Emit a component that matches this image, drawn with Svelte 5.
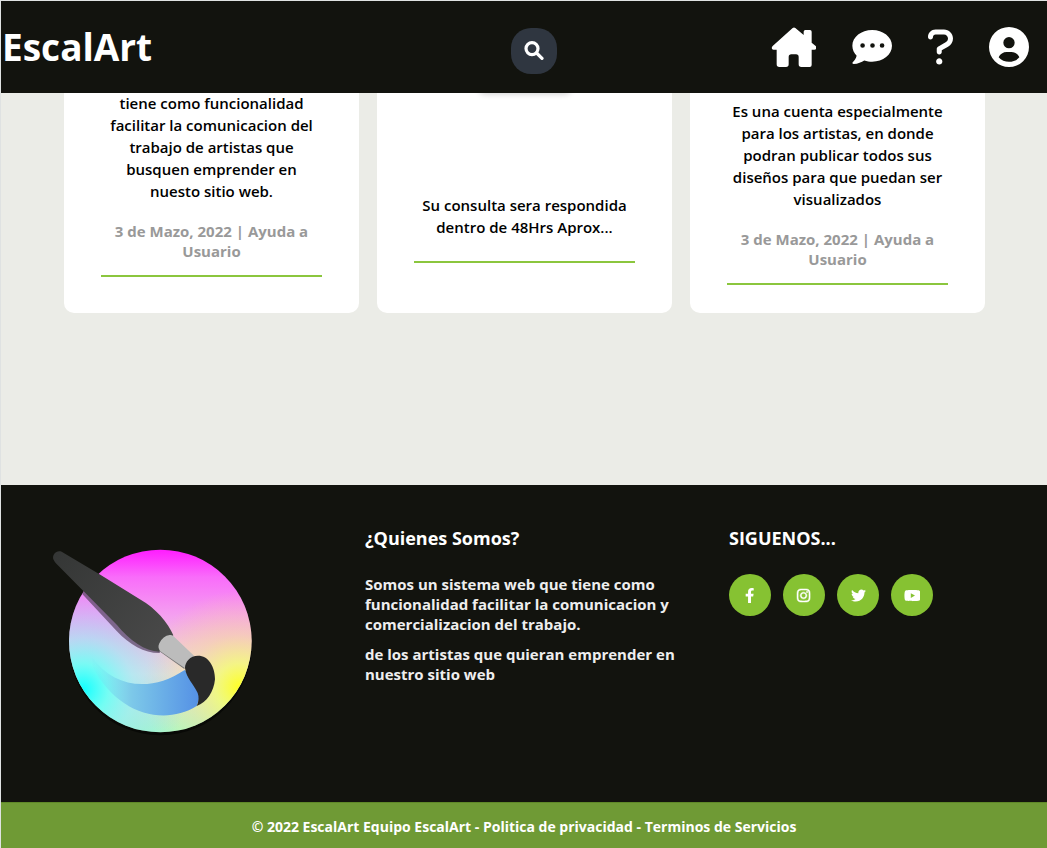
<script>
  const cards = [
    {
      kind: 'first',
      text: 'tiene como funcionalidad facilitar la comunicacion del trabajo de artistas que busquen emprender en nuesto sitio web.',
      meta: '3 de Mazo, 2022 | Ayuda a Usuario'
    },
    { kind: 'second', text: 'Su consulta sera respondida dentro de 48Hrs Aprox...', meta: '' },
    {
      kind: 'third',
      text: 'Es una cuenta especialmente para los artistas, en donde podran publicar todos sus diseños para que puedan ser visualizados',
      meta: '3 de Mazo, 2022 | Ayuda a Usuario'
    }
  ];

  const social = [
    {
      name: 'Facebook',
      box: '0 0 320 512',
      path: 'M279.14 288l14.22-92.66h-88.91v-60.13c0-25.35 12.42-50.06 52.24-50.06h40.42V6.26S260.43 0 225.36 0c-73.22 0-121.08 44.38-121.08 124.72v70.62H22.89V288h81.39v224h100.17V288z'
    },
    {
      name: 'Instagram',
      box: '0 0 448 512',
      path: 'M224.1 141c-63.6 0-114.9 51.3-114.9 114.9s51.3 114.9 114.9 114.9S339 319.5 339 255.9 287.7 141 224.1 141zm0 189.6c-41.1 0-74.7-33.5-74.7-74.7s33.5-74.7 74.7-74.7 74.7 33.5 74.7 74.7-33.6 74.7-74.7 74.7zm146.4-194.3c0 14.9-12 26.8-26.8 26.8-14.9 0-26.8-12-26.8-26.8s12-26.8 26.8-26.8 26.8 12 26.8 26.8zm76.1 27.2c-1.7-35.9-9.9-67.7-36.2-93.9-26.2-26.2-58-34.4-93.9-36.2-37-2.1-147.9-2.1-184.9 0-35.8 1.7-67.6 9.9-93.9 36.1s-34.4 58-36.2 93.9c-2.1 37-2.1 147.9 0 184.9 1.7 35.9 9.9 67.7 36.2 93.9s58 34.4 93.9 36.2c37 2.1 147.9 2.1 184.9 0 35.9-1.7 67.7-9.9 93.9-36.2 26.2-26.2 34.4-58 36.2-93.9 2.1-37 2.1-147.8 0-184.8zM398.8 388c-7.8 19.6-22.9 34.7-42.6 42.6-29.5 11.7-99.5 9-132.1 9s-102.7 2.6-132.1-9c-19.6-7.8-34.7-22.9-42.6-42.6-11.7-29.5-9-99.5-9-132.1s-2.6-102.7 9-132.1c7.8-19.6 22.9-34.7 42.6-42.6 29.5-11.7 99.5-9 132.1-9s102.7-2.6 132.1 9c19.6 7.8 34.7 22.9 42.6 42.6 11.7 29.5 9 99.5 9 132.1s2.7 102.7-9 132.1z',
      bold: true
    },
    {
      name: 'Twitter',
      box: '0 0 512 512',
      path: 'M459.37 151.716c.325 4.548.325 9.097.325 13.645 0 138.72-105.583 298.558-298.558 298.558-59.452 0-114.68-17.219-161.137-47.106 8.447.974 16.568 1.299 25.34 1.299 49.055 0 94.213-16.568 130.274-44.832-46.132-.975-84.792-31.188-98.112-72.772 6.498.974 12.995 1.624 19.818 1.624 9.421 0 18.843-1.3 27.614-3.573-48.081-9.747-84.143-51.98-84.143-102.985v-1.299c13.969 7.797 30.214 12.67 47.431 13.319-28.264-18.843-46.781-51.005-46.781-87.391 0-19.492 5.197-37.36 14.294-52.954 51.655 63.675 129.3 105.258 216.365 109.807-1.624-7.797-2.599-15.918-2.599-24.04 0-57.828 46.782-104.934 104.934-104.934 30.213 0 57.502 12.67 76.67 33.137 23.715-4.548 46.456-13.32 66.599-25.34-7.798 24.366-24.366 44.833-46.132 57.827 21.117-2.273 41.584-8.122 60.426-16.243-14.292 20.791-32.161 39.308-52.628 54.253z'
    },
    {
      name: 'YouTube',
      box: '0 0 576 512',
      path: 'M549.655 124.083c-6.281-23.65-24.787-42.276-48.284-48.597C458.781 64 288 64 288 64S117.22 64 74.629 75.486c-23.497 6.322-42.003 24.947-48.284 48.597-11.412 42.867-11.412 132.305-11.412 132.305s0 89.438 11.412 132.305c6.281 23.65 24.787 41.5 48.284 47.821C117.22 448 288 448 288 448s170.78 0 213.371-11.486c23.497-6.321 42.003-24.171 48.284-47.821 11.412-42.867 11.412-132.305 11.412-132.305s0-89.438-11.412-132.305zm-317.51 213.508V175.185l142.739 81.205-142.739 81.201z'
    }
  ];
</script>

<div class="page">
  <header>
    <a class="brand" href="#inicio">EscalArt</a>
    <button class="search" aria-label="Buscar">
      <svg width="20" height="20" viewBox="0 0 20 20" fill="none" stroke="#fff" stroke-width="3.2" stroke-linecap="round">
        <circle cx="8" cy="7.6" r="6" />
        <path d="M12.6 12L18 17.4" />
      </svg>
    </button>
    <nav aria-label="Principal">
      <a href="#inicio" aria-label="Inicio">
        <svg width="45" height="40" viewBox="-2 -1 135 120">
          <path d="M63 2q4-3 8 0L96 23V13q0-5 5-5h14q5 0 5 5v33l12 10q5 5 1 9-1 2-5 2h-8v46q0 6-6 6H89q-8 0-8-8V89q0-8-8-8H59q-8 0-8 8v22q0 8-8 8H23q-8 0-8-8V67H6q-4 0-5-3-2-4 2-8z" />
        </svg>
      </a>
      <a href="#mensajes" aria-label="Mensajes">
        <svg width="40" height="36" viewBox="-1 -1 121 109">
          <path fill-rule="evenodd" d="M60 2C27 2 0 23 0 50c0 12 5 22 13 30-2 9-7 15-12 20-2 3 0 5 3 5 13-1 24-6 32-11 8 3 16 4 24 4 33 0 60-21 60-48S93 2 60 2zM31 42a7 7 0 1 1 0 14 7 7 0 0 1 0-14zm30 0a7 7 0 1 1 0 14 7 7 0 0 1 0-14zm29 0a7 7 0 1 1 0 14 7 7 0 0 1 0-14z" />
        </svg>
      </a>
      <a href="#ayuda" aria-label="Ayuda">
        <svg width="25" height="40" viewBox="0 0 320 512">
          <path d="M204.3 32.01H96c-52.94 0-96 43.06-96 96c0 17.67 14.31 31.1 32 31.1s32-14.32 32-31.1c0-17.64 14.34-32 32-32h108.3C232.8 96.01 256 119.2 256 147.8c0 19.72-10.97 37.47-30.5 47.33L127.8 252.4C117.1 258.2 112 268.7 112 280v40c0 17.67 14.31 31.99 32 31.99s32-14.32 32-31.99V298.3L256 251.3c39.47-19.75 64-59.42 64-103.5C320 83.95 268.1 32.01 204.3 32.01zM144 400c-22.09 0-40 17.91-40 40s17.91 39.1 40 39.1s40-17.9 40-39.1S166.1 400 144 400z" />
        </svg>
      </a>
      <a href="#cuenta" aria-label="Cuenta">
        <svg width="40" height="40" viewBox="0 0 120 120">
          <path fill-rule="evenodd" d="M60 0a60 60 0 1 1 0 120A60 60 0 0 1 60 0zm0 30a17 17 0 1 0 0 34 17 17 0 0 0 0-34zM29 91c15 18 47 18 62 0-4-10-14-16-24-16H53c-10 0-20 6-24 16z" />
        </svg>
      </a>
    </nav>
  </header>

  <main>
    {#each cards as card}
      <article class={card.kind}>
        {#if card.kind === 'second'}
          <div class="tab"></div>
        {/if}
        <p class="text">{card.text}</p>
        {#if card.meta}
          <p class="meta">{card.meta}</p>
        {/if}
        <hr />
      </article>
    {/each}
  </main>

  <footer>
    <div class="columns">
      <div class="logo">
        <svg width="230" height="220" viewBox="0 0 690 660" role="img" aria-label="Logo de EscalArt">
          <defs>
            <linearGradient id="magenta" x1="0" y1="59" x2="0" y2="607" gradientUnits="userSpaceOnUse">
              <stop offset="0" stop-color="#ff1cff" />
              <stop offset=".15" stop-color="#f96cfa" />
              <stop offset=".36" stop-color="#f4a0f0" />
              <stop offset=".52" stop-color="#f0c4e0" />
              <stop offset=".68" stop-color="#e8e6e0" />
              <stop offset="1" stop-color="#a4ffc8" />
            </linearGradient>
            <radialGradient id="yellow" cx="600" cy="472" r="290" gradientUnits="userSpaceOnUse">
              <stop offset="0" stop-color="#ffff22" />
              <stop offset=".25" stop-color="#f6fa70" stop-opacity=".8" />
              <stop offset=".55" stop-color="#fadc90" stop-opacity=".45" />
              <stop offset="1" stop-color="#ffcf90" stop-opacity="0" />
            </radialGradient>
            <radialGradient id="cyan" cx="128" cy="478" r="310" gradientUnits="userSpaceOnUse">
              <stop offset="0" stop-color="#10ffff" />
              <stop offset=".25" stop-color="#66fff8" stop-opacity=".85" />
              <stop offset=".5" stop-color="#90e8ff" stop-opacity=".55" />
              <stop offset="1" stop-color="#a0b8ff" stop-opacity="0" />
            </radialGradient>
            <linearGradient id="stroke" x1="165" y1="0" x2="475" y2="0" gradientUnits="userSpaceOnUse">
              <stop offset="0" stop-color="#70e0f0" stop-opacity=".1" />
              <stop offset=".35" stop-color="#7dc9e9" />
              <stop offset="1" stop-color="#5591e5" />
            </linearGradient>
            <linearGradient id="handle" x1="40" y1="60" x2="390" y2="360" gradientUnits="userSpaceOnUse">
              <stop offset="0" stop-color="#343635" />
              <stop offset="1" stop-color="#4a4a4a" />
            </linearGradient>
            <clipPath id="disc"><circle cx="361" cy="333" r="274" /></clipPath>
          </defs>
          <circle cx="361" cy="341" r="275" fill="#080906" />
          <g clip-path="url(#disc)">
            <rect x="80" y="50" width="570" height="570" fill="url(#magenta)" />
            <rect x="80" y="50" width="570" height="570" fill="url(#yellow)" />
            <rect x="80" y="50" width="570" height="570" fill="url(#cyan)" />
            <path d="M158 384C220 470 330 490 434 420L462 450L480 500L470 528C370 590 230 550 158 410z" fill="url(#stroke)" />
            <path d="M110 174L230 303C270 345 315 370 359 369L365 348L250 280L140 180z" fill="#5f4a69" opacity=".75" />
            <path d="M356 362L433 417L438 402L365 348z" fill="#777" />
          </g>
          <path d="M65 65C50 59 36 72 40 88Q43 95 50 102L231 285C270 333 315 363 357 365L400 316C386 279 344 232 302 209L181 134z" fill="url(#handle)" />
          <path d="M399 317L462 377L434 414L360 363Q352 352 358 340Q369 317 389 315Q395 314 399 317z" fill="#bcbcbc" />
          <path d="M474 377C505 377 525 409 525 448C521 486 501 517 470 528Q480 508 473 489C461 462 439 445 435 414C435 396 450 377 474 377z" fill="#292929" />
        </svg>
      </div>
      <section>
        <h2>¿Quienes Somos?</h2>
        <p>Somos un sistema web que tiene como funcionalidad facilitar la comunicacion y comercializacion del trabajo.</p>
        <p>de los artistas que quieran emprender en nuestro sitio web</p>
      </section>
      <section>
        <h2>SIGUENOS...</h2>
        <div class="social">
          {#each social as item}
            <a href="#{item.name.toLowerCase()}" aria-label={item.name}>
              <svg class:bold={item.bold} height="15" viewBox={item.box}><path d={item.path} /></svg>
            </a>
          {/each}
        </div>
      </section>
    </div>
    <div class="legal">© 2022 EscalArt Equipo EscalArt - Politica de privacidad - Terminos de Servicios</div>
  </footer>
</div>

<style>
  :global(body) {
    margin: 0;
    background: #ebece7;
  }
  .page {
    box-sizing: border-box;
    min-height: 100vh;
    display: flex;
    flex-direction: column;
    border-top: 1px solid #dfe2e2;
    border-left: 1px solid #dfe2e2;
    font-family: 'Open Sans', sans-serif;
    font-weight: 700;
    color: #000;
  }
  svg {
    display: block;
    fill: #fff;
  }
  .search svg {
    fill: none;
  }
  .bold {
    stroke: #fff;
    stroke-width: 16;
    overflow: visible;
  }
  header {
    position: sticky;
    top: 0;
    z-index: 2;
    display: grid;
    grid-template-columns: 51fr auto 49fr;
    align-items: center;
    height: 92px;
    background: #12130e;
  }
  .brand {
    padding-left: 1px;
    font-size: 37px;
    line-height: 52px;
    color: #fff;
    text-decoration: none;
  }
  .search {
    display: grid;
    place-items: center;
    width: 46px;
    height: 46px;
    margin-top: 8px;
    padding: 0;
    border: 0;
    border-radius: 20px;
    background: #2f3640;
  }
  nav {
    display: flex;
    justify-content: flex-end;
    align-items: center;
    gap: 36px;
    padding-right: 18px;
  }
  main {
    flex: 1;
    display: grid;
    grid-template-columns: repeat(3, 1fr);
    gap: 18px;
    margin-top: -12px;
    padding: 0 62px 172px 63px;
  }
  article {
    display: flex;
    flex-direction: column;
    padding: 0 37px 28px;
    border-radius: 10px;
    background: #fff;
    text-align: center;
    font-size: 15px;
  }
  .first {
    padding-top: 11px;
  }
  .third {
    padding-top: 19px;
  }
  .tab {
    align-self: center;
    width: 92px;
    height: 12px;
    margin-bottom: 101px;
    border-radius: 8px;
    background: #fff;
    box-shadow: 0 1px 6px rgba(0, 0, 0, 0.2);
  }
  .text {
    margin: 0;
    line-height: 22px;
    font-weight: 600;
  }
  .meta {
    margin: 19px 0 0;
    line-height: 20px;
    color: #999;
  }
  hr {
    width: 100%;
    height: 2px;
    margin: 14px 0 0;
    border: 0;
    background: #8bc63e;
  }
  .second hr {
    margin-top: 23px;
  }
  footer {
    background: #12130e;
    color: #fff;
  }
  .columns {
    display: grid;
    grid-template-columns: repeat(3, 1fr);
    gap: 46px;
    padding: 41px 0 48px;
  }
  .logo {
    padding: 4px 0 4px 39px;
  }
  h2 {
    margin: 0 0 24px;
    font-size: 18px;
    line-height: 24px;
  }
  section p {
    margin: 0 0 10px;
    font-size: 15px;
    line-height: 20px;
    color: #eee;
  }
  .social {
    display: flex;
    gap: 12px;
  }
  .social a {
    display: grid;
    place-items: center;
    width: 42px;
    height: 42px;
    border-radius: 50%;
    background: #86c232;
  }
  .legal {
    padding: 13px 0 11px;
    border-top: 1px solid #5f8828;
    background: #6f9a35;
    text-align: center;
    font-size: 14px;
    line-height: 21px;
  }
</style>
